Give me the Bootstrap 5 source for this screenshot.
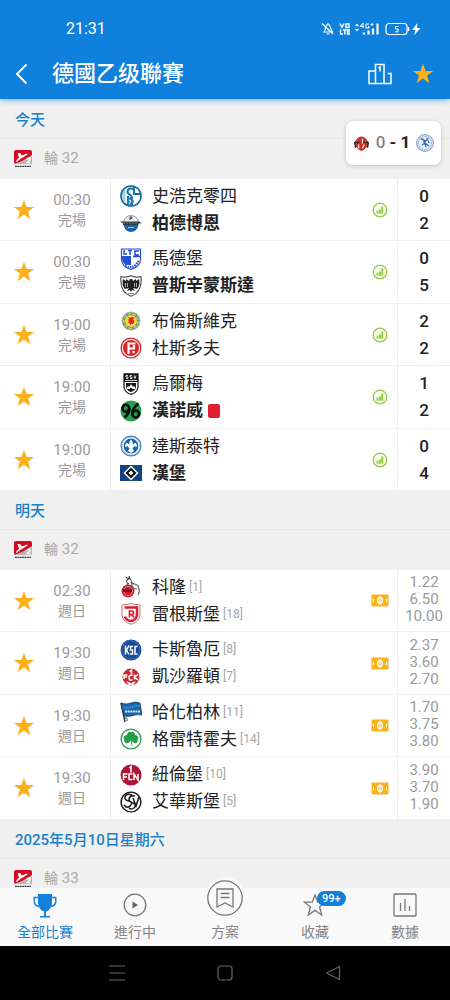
<!DOCTYPE html>
<html lang="zh-Hant">
<head>
<meta charset="utf-8">
<meta name="viewport" content="width=device-width, initial-scale=1">
<title>德國乙级聯賽</title>
<link href="https://cdn.jsdelivr.net/npm/bootstrap@5.3.0/dist/css/bootstrap.min.css" rel="stylesheet">
<style>
  :root { --brand: #0f80dc; --muted: #9a9a9a; --line: #efefef; }
  body { font-family: Roboto, "Noto Sans CJK TC", sans-serif; background: #f0f0f0; color: #222; }
  button { border: 0; background: none; padding: 0; line-height: 1; }
  svg { display: block; flex: none; }
  .top-bar { background: var(--brand); color: #fff; box-shadow: 0 1px 6px #0f80dc99; z-index: 2; }
  .status { height: 48px; padding: 10px 27px 0 66px; font-size: 16px; }
  .title-row { height: 51px; padding: 0 16px 0 14px; }
  .title-row h1 { font-size: 22px; font-weight: 500; line-height: 30px; }
  .feed { overflow-y: auto; scrollbar-width: none; }
  .feed::-webkit-scrollbar { display: none; }
  .day { height: 40px; padding: 0 15px; font-size: 15px; line-height: 43px; font-weight: 500; color: #1b80ca; border-bottom: 1px solid #e8e8e8; }
  .round { height: 39px; padding: 0 14px; gap: 12px; font-size: 15px; color: #aaa; }
  .round span { font-size: 14px; }
  .games { background: #fff; }
  .game { height: 62px; border-top: 1px solid var(--line); }
  .game:nth-child(even) { height: 63px; }
  .fav { width: 48px; }
  .kick { width: 48px; font-size: 15px; line-height: 20px; color: var(--muted); }
  .kick span { display: block; font-size: 14px; }
  .sides { margin-left: 14px; padding-left: 9px; border-left: 1px solid var(--line); font-size: 17px; line-height: 27px; }
  .side { height: 27px; gap: 10px; white-space: nowrap; }
  .side small { margin-left: -7px; font-size: 12px; color: #a6a6a6; }
  .win b { font-weight: 700; }
  .red-card { width: 12px; height: 14px; margin-left: -5px; border-radius: 2px; background: #e01f33; }
  .info { width: 35px; border-right: 1px solid var(--line); }
  .score, .odds { width: 52px; text-align: center; }
  .score { font-size: 17px; font-weight: 500; line-height: 27px; }
  .odds { padding-bottom: 2px; font-size: 15px; line-height: 17px; color: var(--muted); }
  .live { top: 121px; right: 9px; width: 95px; height: 44px; border-radius: 7px; background: #fff; box-shadow: 0 1px 4px #0003; font-size: 17px; z-index: 3; gap: 6px; }
  .tabs { height: 59px; background: #f9f9f9; z-index: 2; }
  .tabs a { color: #858585; font-size: 14px; line-height: 20px; text-decoration: none; padding-bottom: 4px; }
  .tabs a.active { color: #1b80ca; }
  .tab-icon { height: 26px; margin-bottom: 3px; }
  .hub { width: 42px; height: 42px; margin: -20px 0 3px; border-radius: 50%; background: #f9f9f9; }
  .count { top: -2px; left: 14px; padding: 0 5px; border-radius: 8px; background: var(--brand); color: #fff; font-size: 11px; line-height: 15px; font-weight: 500; }
  .sys { height: 55px; background: #000; }
  .sys button { width: 24%; }
</style>
</head>
<body>

<svg width="0" height="0" class="position-absolute" aria-hidden="true">
  <defs>
    <symbol id="star" viewBox="0 0 22 22"><path d="M11 .8 13.600 8H21.200L15.100 12.500 17.400 20.200 11 15.600 4.600 20.200 6.900 12.500.8 8H8.400Z" fill="#fcb01c"/></symbol>
    <symbol id="bundesliga" viewBox="0 0 18 18"><rect width="18" height="14" rx="2" fill="#d20a24"/><path d="M1 13.500 8 11 18 5V14H2Z" fill="#b5b5b5"/><path d="M12.500 9.500 16 8v2l-3 2.500h3.500" fill="none" stroke="#fff" stroke-width="1.300"/><path d="M3.500 3H6L8 5.500 13 3.500 13.500 4.500 9 7.500 7 8.500 2.500 12 2 11 5 7.500Z" fill="#fff"/><path d="M1 16.300h16" stroke="#444" stroke-width="1.300" stroke-dasharray="2 .4"/></symbol>
    <symbol id="stats" viewBox="0 0 16 16"><circle cx="8" cy="8" r="6.800" fill="#fbfff2" stroke="#96cc45" stroke-width="1.300"/><path d="M5.500 8.500v3.200M8 7.500v4.200M10.300 4.500v7.200" stroke="#8cc63a" stroke-width="1.800"/></symbol>
    <symbol id="ticket" viewBox="0 0 18 13"><rect x=".5" y=".5" width="17" height="12" rx="1" fill="#f8b21d"/><ellipse cx="9" cy="6.500" rx="2.300" ry="3" fill="none" stroke="#fff" stroke-width="1.300"/><path d="M9 2v9M2.500 5v3M15.500 5v3" stroke="#fff" stroke-width="1.100"/></symbol>

    <symbol id="schalke" viewBox="0 0 22 22"><circle cx="11" cy="11" r="10" fill="#e9f5fb" stroke="#0f6597" stroke-width="1.600"/><path d="M13 2A9 9 0 0 1 19.500 9H12Z M12 12h8a9 9 0 0 1-6 7.500Z" fill="#fff"/><path d="M6 3C2 6 1 13 5 18V6Z" fill="#9ed0e8"/><path d="M13 4C8 2 6 7 9 9s4 3 0 5M14 1.500V9h6.500M8 11v9M12 12v8" fill="none" stroke="#1670a4" stroke-width="1.900"/><path d="M7 13h5l2 3-2 4.500H8Z" fill="#267eae"/><path d="m9 15 2 1-2 3" stroke="#fff" fill="none"/></symbol>
    <symbol id="paderborn" viewBox="0 0 22 22"><circle cx="11" cy="11" r="7.500" fill="#edf1f4" stroke="#8a969e"/><path d="M4 13h14a7 7 0 0 1-14 0Z" fill="#1660ac"/><path d="M0 9.500h19l3 2H18v1.500H3V11.500Z" fill="#333b43"/><path d="M3 11h15" stroke="#99a" stroke-dasharray="2 1" stroke-width=".7"/><path d="M10 8V5h2v1.500h-2" stroke="#445" fill="none"/><path d="M8 15.500h6" stroke="#9cf"/></symbol>
    <symbol id="magdeburg" viewBox="0 0 22 22"><path d="M1.500 1H20.500V12C20 17 16 20 11 21.500 5 20 2 16 1.500 12Z" fill="#fff" stroke="#2b4ecb" stroke-width="1.200"/><path d="M2 8H11V17H5.500C3 15 2 13 2 10Z" fill="#2450d4"/><path d="M4 2v4h3M8 2.500h4M10 3v4M19 3h-4v4h4M13 8.500h7" fill="none" stroke="#2450d4" stroke-width="1.500"/><path d="M5 18q6 3 11-1l3-5" fill="none" stroke="#2450d4" stroke-width="2.500" stroke-dasharray="1.500 1"/></symbol>
    <symbol id="munster" viewBox="0 0 22 22"><path d="M1 1.500Q6 3 11 .8 16 3 21 1.500C22 12 18 19 11 21.300 4 19 0 12 1 1.500Z" fill="#fff" stroke="#444" stroke-width="1.100"/><path d="M3 4l3 2V4l3 2 1-2h2l1 2 3-2v2l3-2c1 5 0 8-2 10l-4-1 2 3-3-1-1 2-1-2-3 1 2-3-4 1C3 12 2 9 3 4Z" fill="#222"/><path d="M5.500 8v4M7.500 8v4M14.500 8v4M16.500 8v4" stroke="#fff" stroke-width=".6"/><path d="M8 18.500h6" stroke="#888"/></symbol>
    <symbol id="braunschweig" viewBox="0 0 22 22"><circle cx="11" cy="11" r="9" fill="#3e7dba" stroke="#a8b9a0"/><circle cx="11" cy="11" r="7.200" fill="none" stroke="#d8cb3a" stroke-width="1.600" stroke-dasharray="4 1"/><circle cx="11" cy="11" r="6" fill="#f6df3d"/><path d="M8 7l2 .5L12 7l3 1-2 1 1.500 2-1.500 3.500-1.500-1L10 15.500 9.500 13 7.500 12.500 9.500 11 7.500 10 9.500 9Z" fill="#dc2727"/></symbol>
    <symbol id="dusseldorf" viewBox="0 0 22 22"><circle cx="11" cy="11" r="10.500" fill="#da2528"/><circle cx="11" cy="11" r="8.600" fill="none" stroke="#fff" stroke-width="1.100"/><path d="M15.500 6.500H8.500V17M8.500 11.500H14V8" fill="none" stroke="#fff" stroke-width="2.200"/><circle cx="13.500" cy="15" r="1.300" fill="#fff"/></symbol>
    <symbol id="ulm" viewBox="0 0 22 22"><path d="M4 .8H18V14Q17 20 11 21.300 5 20 4 14Z" fill="#fff" stroke="#151515" stroke-width="1.200"/><path d="M4 1H18V9H4Z" fill="#161616"/><path d="M8 2.500H6V4h2v1.500H6M12 2.500h-2V4h2v1.500h-2M14 2.500l1 3 1-3M5 7.500h12" fill="none" stroke="#fff" stroke-width=".8"/><path d="M6 10h10v4q-1 4-5 5-4-1-5-5Z" fill="#191919"/><path d="M7 16V13.500H9.500L11 11 12.500 13.500H15V16H12.500L11 14.500 9.500 16Z" fill="#fff"/></symbol>
    <symbol id="hannover" viewBox="0 0 22 22"><circle cx="11" cy="11" r="10.500" fill="#2c9b50"/><circle cx="5.800" cy="8.200" r="3.400" fill="none" stroke="#081008" stroke-width="2.600"/><path d="M9.200 8Q10 13 4.500 17.500M18.500 3.500Q12.500 8 12.300 14" fill="none" stroke="#081008" stroke-width="2.700"/><circle cx="15.700" cy="14" r="3.400" fill="none" stroke="#081008" stroke-width="2.600"/></symbol>
    <symbol id="darmstadt" viewBox="0 0 22 22"><circle cx="11" cy="11" r="9.900" fill="#fff" stroke="#3e7cb6" stroke-width="1.200"/><circle cx="11" cy="11" r="8.600" fill="none" stroke="#7aa6ce" stroke-width="1" stroke-dasharray="1 1"/><circle cx="11" cy="11" r="7.400" fill="#1764ad"/><path d="M11 4.500Q14 8 12 11.500 13 8 15.500 8 18 10 16 12.500 15.500 11 14.500 11 14 12.500 12.500 13L14 16 11 18 8 16 9.500 13Q8 12.500 7.500 11 6.500 11 6 12.500 4 10 6.500 8 9 8 10 11.500 8 8 11 4.500Z" fill="#fff"/></symbol>
    <symbol id="hamburg" viewBox="0 0 22 22"><path d="M0 3H22V19H0Z" fill="#124483"/><path d="m11 3.500 7.500 7.500-7.500 7.500L3.500 11Z" fill="#fff"/><path d="m11 5.500 5.500 5.500-5.500 5.500L5.500 11Z" fill="#111"/><path d="m11 8.500 2.500 2.500-2.500 2.500L8.500 11Z" fill="#fff"/></symbol>
    <symbol id="koln" viewBox="0 0 22 22"><circle cx="8" cy="15" r="6.500" fill="#c71932"/><circle cx="8" cy="15" r="4.500" fill="none" stroke="#eaa" stroke-width=".7"/><path d="M8 9 6.500 5 9 2 11 4 12 7 18 9.500 19.500 15 18 19M11 6l2 6 4 1M9 7 5 11" fill="none" stroke="#666" stroke-width="1.200"/><path d="M9 3 5.500 1M10 3 9 0" stroke="#222"/><path d="M3 15h9M4 13v3M8 13v3M11 13v3" stroke="#4c0711" stroke-width="1.200"/></symbol>
    <symbol id="regensburg" viewBox="0 0 22 22"><path d="M2 2Q11-.5 20 2V12Q19 19 11 21.300 3 19 2 12Z" fill="#fff" stroke="#d76b75" stroke-width="1"/><path d="M4.500 4.500H17V12Q16 17.500 11 18 6 17.500 5 13.500" fill="none" stroke="#d61f2d" stroke-width="2.500"/><path d="M9.500 14.500V8H11.500Q13.500 8 13.500 10T11.500 11.500H10M11.500 11.500 14 14.500" fill="none" stroke="#d61f2d" stroke-width="1.700"/></symbol>
    <symbol id="karlsruhe" viewBox="0 0 22 22"><circle cx="11" cy="11" r="10.500" fill="#174a98"/><circle cx="11" cy="11" r="9.200" fill="none" stroke="#5480bf" stroke-width=".7"/><path d="M5.500 6.500v9M9 6.500 6.500 11 9 15.500M13 7.500h-2.500v3.500H12.500v4H10M17.500 7.500H15v7.500h2.500" fill="none" stroke="#fff" stroke-width="1.500"/></symbol>
    <symbol id="kaiserslautern" viewBox="0 0 22 22"><circle cx="11" cy="11" r="8.500" fill="#c92833"/><path d="M9.500 5.500 11.500 4V8.500M4 13V9H7.500M4 11H7M12.500 9.500Q8.500 8.500 9 12T12.500 13.500M14.500 8.500v5M18 8.500l-3.500 2.500 3.500 3" fill="none" stroke="#fff" stroke-width="1.500"/><path d="M6 15.500l3 .5 2 1.500 2-1.500 3-.5-3 3.500H9Z" fill="#fff"/></symbol>
    <symbol id="hertha" viewBox="0 0 22 22"><path d="M1 2 5 21" stroke="#26343f" stroke-width="1.500"/><path d="M1 2Q6 4 11 2T20 2L22 14Q17 13 13 14.500T4 15Z" fill="#1766ac" stroke="#16314c" stroke-width=".7"/><path d="M3 6Q8 8 12 6T20 5" fill="none" stroke="#2f80c8" stroke-width="2"/><path d="M5 10.500h15" stroke="#d5e6f6" stroke-width="2" stroke-dasharray="2 .6"/><path d="M5 17q3-1 2 3" stroke="#444" fill="none"/></symbol>
    <symbol id="furth" viewBox="0 0 22 22"><circle cx="11" cy="11" r="9.900" fill="#fff" stroke="#2b9d55" stroke-width="1.300"/><path d="M11 11Q6 8 8 5 10 3 11 5 12 3 14 5 16 8 11 11Q13 6 17 8 19 10 17 12 18 14 16 15 13 15 11 11Q10 15 6 15 4 14 5 12 3 10 5 8 9 6 11 11L12 17.500" fill="#22a04b" stroke="#22a04b"/></symbol>
    <symbol id="nurnberg" viewBox="0 0 22 22"><circle cx="11" cy="11" r="10.500" fill="#ad1737"/><path d="M9.500 4 11 2.500V8.500M3.500 16V10H7.500M3.500 13H7M12.500 10H9V15.500H12.500M14 16V10L18 16V10" fill="none" stroke="#fff" stroke-width="1.500"/></symbol>
    <symbol id="elversberg" viewBox="0 0 22 22"><circle cx="11" cy="11" r="9.900" fill="#fff" stroke="#171717" stroke-width="1.400"/><path d="M12 4Q6 2 5 6 4 9 9 10T10 15Q7 18 4 14M15 5Q10 4 9 8 9 11 13 12T14 17Q11 19 9 17M13 7 16 15 19 6" fill="none" stroke="#1a1a1a" stroke-width="1.500"/></symbol>
  </defs>
</svg>

<div class="d-flex flex-column vh-100 position-relative overflow-hidden">
  <header class="top-bar position-relative">
    <div class="status d-flex align-items-center justify-content-between">
      <span>21:31</span>
      <svg width="102" height="16" viewBox="0 0 102 16" fill="none" stroke="#fff" stroke-width="1.200" aria-label="5%">
        <path d="M3 11Q4.500 9 4.500 6.500 5 3.500 7 3.500T9.500 7L11.500 11ZM1 2.500 12 13M7 2v1.500M5.500 13h3"/>
        <path d="M19 2.500 21 6.500 23 2.500M25 3h3v3.500h-3ZM19.500 8.500V13H22M22 9h3.500M23.800 9v4.500M29 9h-2.500v4H29M26.500 11H29" stroke-width="1.400"/>
        <path d="M34.500 5 36 3.500 37.500 5M34.500 8 36 9.500 37.500 8" stroke-width="1.100"/>
        <path d="M42 7V2L39 5.500h4M48 3h-3v4h3V5.500h-1M49.500 3.500h3M51 2v3" stroke-width="1"/>
        <path d="M43 13.500v-2M47.500 13.500v-4M52 13.500v-6M56.500 13.500V2.500" stroke-width="2.200"/>
        <rect x="65" y="2.500" width="21" height="11" rx="3"/><path d="M87.500 6v4" stroke-width="1.500"/>
        <path d="M77.500 5.500h-3V8h2.500v2.800h-3" stroke-width="1"/>
        <path d="M96.500 2 91 9h3.500L93 14.500 99.500 7H96Z" fill="#fff" stroke="none"/>
      </svg>
    </div>
    <div class="title-row d-flex align-items-center">
      <button aria-label="返回"><svg width="14" height="22" viewBox="0 0 14 22" fill="none" stroke="#fff" stroke-width="1.900"><path d="M12.500 1.500 3 11l9.500 9.500"/></svg></button>
      <h1 class="mb-0 ms-4 flex-grow-1">德國乙级聯賽</h1>
      <button class="me-3" aria-label="排名"><svg width="24" height="22" viewBox="0 0 24 22" fill="none" stroke="#fff" stroke-width="1.500"><path d="M7.500 20.500V1.500h8.500v19M7.500 8H1v12.500h22V10.500h-3.500M10.500 5 12 4V8.500"/></svg></button>
      <button class="ms-1" aria-label="收藏聯賽"><svg width="22" height="22"><use href="#star"/></svg></button>
    </div>
  </header>

  <a href="#live" class="live position-absolute d-flex align-items-center justify-content-center text-decoration-none text-dark">
    <svg width="17" height="17" viewBox="0 0 18 18"><path d="M1 8 4 5 5 12 2 14ZM17 8 14 5 13 12 16 14Z" fill="#332b20"/><path d="M4 4Q9-1 14 4L15.500 10Q13 16 9 17 5 16 2.500 10Z" fill="#cb342d"/><path d="M6 10v4M10 4v5M12 10l-2 4" stroke="#fff" stroke-width="1.200"/><path d="M3 8h4M11 8h4" stroke="#40251f"/></svg>
    <span class="fw-medium"><span class="text-black-50">0</span> <b>- 1</b></span>
    <svg width="18" height="18" viewBox="0 0 18 18"><circle cx="9" cy="9" r="8.400" fill="#eef4fb" stroke="#7397c9"/><circle cx="9" cy="9" r="6.600" fill="none" stroke="#91aed6" stroke-width="1.300" stroke-dasharray="1.300 .7"/><path d="M5 5q4 0 3 4l4-5M6 11l3-2 4 3M8 6l2 7M12 6l1 3" stroke="#356aad" stroke-width="1.300" fill="none"/></svg>
  </a>

  <main class="feed flex-grow-1">
    <section>
      <h2 class="day mb-0">今天</h2>
      <div class="round d-flex align-items-center"><svg width="18" height="18"><use href="#bundesliga"/></svg><div><span>輪</span> 32</div></div>
      <ul class="games list-unstyled mb-0">
        <li class="game d-flex align-items-center">
          <button class="fav" aria-label="收藏"><svg class="mx-auto" width="22" height="22"><use href="#star"/></svg></button>
          <div class="kick text-center">00:30<span>完場</span></div>
          <div class="sides h-100 flex-grow-1 d-flex flex-column justify-content-center">
            <div class="side d-flex align-items-center"><svg width="22" height="22"><use href="#schalke"/></svg>史浩克零四</div>
            <div class="side win d-flex align-items-center"><svg width="22" height="22"><use href="#paderborn"/></svg><b>柏德博恩</b></div>
          </div>
          <div class="info h-100 d-flex align-items-center justify-content-center"><svg width="16" height="16"><use href="#stats"/></svg></div>
          <div class="score">0<br>2</div>
        </li>
        <li class="game d-flex align-items-center">
          <button class="fav" aria-label="收藏"><svg class="mx-auto" width="22" height="22"><use href="#star"/></svg></button>
          <div class="kick text-center">00:30<span>完場</span></div>
          <div class="sides h-100 flex-grow-1 d-flex flex-column justify-content-center">
            <div class="side d-flex align-items-center"><svg width="22" height="22"><use href="#magdeburg"/></svg>馬德堡</div>
            <div class="side win d-flex align-items-center"><svg width="22" height="22"><use href="#munster"/></svg><b>普斯辛蒙斯達</b></div>
          </div>
          <div class="info h-100 d-flex align-items-center justify-content-center"><svg width="16" height="16"><use href="#stats"/></svg></div>
          <div class="score">0<br>5</div>
        </li>
        <li class="game d-flex align-items-center">
          <button class="fav" aria-label="收藏"><svg class="mx-auto" width="22" height="22"><use href="#star"/></svg></button>
          <div class="kick text-center">19:00<span>完場</span></div>
          <div class="sides h-100 flex-grow-1 d-flex flex-column justify-content-center">
            <div class="side d-flex align-items-center"><svg width="22" height="22"><use href="#braunschweig"/></svg>布倫斯維克</div>
            <div class="side d-flex align-items-center"><svg width="22" height="22"><use href="#dusseldorf"/></svg>杜斯多夫</div>
          </div>
          <div class="info h-100 d-flex align-items-center justify-content-center"><svg width="16" height="16"><use href="#stats"/></svg></div>
          <div class="score">2<br>2</div>
        </li>
        <li class="game d-flex align-items-center">
          <button class="fav" aria-label="收藏"><svg class="mx-auto" width="22" height="22"><use href="#star"/></svg></button>
          <div class="kick text-center">19:00<span>完場</span></div>
          <div class="sides h-100 flex-grow-1 d-flex flex-column justify-content-center">
            <div class="side d-flex align-items-center"><svg width="22" height="22"><use href="#ulm"/></svg>烏爾梅</div>
            <div class="side win d-flex align-items-center"><svg width="22" height="22"><use href="#hannover"/></svg><b>漢諾威</b><i class="red-card"></i></div>
          </div>
          <div class="info h-100 d-flex align-items-center justify-content-center"><svg width="16" height="16"><use href="#stats"/></svg></div>
          <div class="score">1<br>2</div>
        </li>
        <li class="game d-flex align-items-center">
          <button class="fav" aria-label="收藏"><svg class="mx-auto" width="22" height="22"><use href="#star"/></svg></button>
          <div class="kick text-center">19:00<span>完場</span></div>
          <div class="sides h-100 flex-grow-1 d-flex flex-column justify-content-center">
            <div class="side d-flex align-items-center"><svg width="22" height="22"><use href="#darmstadt"/></svg>達斯泰特</div>
            <div class="side win d-flex align-items-center"><svg width="22" height="22"><use href="#hamburg"/></svg><b>漢堡</b></div>
          </div>
          <div class="info h-100 d-flex align-items-center justify-content-center"><svg width="16" height="16"><use href="#stats"/></svg></div>
          <div class="score">0<br>4</div>
        </li>
      </ul>
    </section>

    <section>
      <h2 class="day mb-0">明天</h2>
      <div class="round d-flex align-items-center"><svg width="18" height="18"><use href="#bundesliga"/></svg><div><span>輪</span> 32</div></div>
      <ul class="games list-unstyled mb-0">
        <li class="game d-flex align-items-center">
          <button class="fav" aria-label="收藏"><svg class="mx-auto" width="22" height="22"><use href="#star"/></svg></button>
          <div class="kick text-center">02:30<span>週日</span></div>
          <div class="sides h-100 flex-grow-1 d-flex flex-column justify-content-center">
            <div class="side d-flex align-items-center"><svg width="22" height="22"><use href="#koln"/></svg>科隆<small>[1]</small></div>
            <div class="side d-flex align-items-center"><svg width="22" height="22"><use href="#regensburg"/></svg>雷根斯堡<small>[18]</small></div>
          </div>
          <div class="info h-100 d-flex align-items-center justify-content-center"><svg width="18" height="13"><use href="#ticket"/></svg></div>
          <div class="odds">1.22<br>6.50<br>10.00</div>
        </li>
        <li class="game d-flex align-items-center">
          <button class="fav" aria-label="收藏"><svg class="mx-auto" width="22" height="22"><use href="#star"/></svg></button>
          <div class="kick text-center">19:30<span>週日</span></div>
          <div class="sides h-100 flex-grow-1 d-flex flex-column justify-content-center">
            <div class="side d-flex align-items-center"><svg width="22" height="22"><use href="#karlsruhe"/></svg>卡斯魯厄<small>[8]</small></div>
            <div class="side d-flex align-items-center"><svg width="22" height="22"><use href="#kaiserslautern"/></svg>凱沙羅頓<small>[7]</small></div>
          </div>
          <div class="info h-100 d-flex align-items-center justify-content-center"><svg width="18" height="13"><use href="#ticket"/></svg></div>
          <div class="odds">2.37<br>3.60<br>2.70</div>
        </li>
        <li class="game d-flex align-items-center">
          <button class="fav" aria-label="收藏"><svg class="mx-auto" width="22" height="22"><use href="#star"/></svg></button>
          <div class="kick text-center">19:30<span>週日</span></div>
          <div class="sides h-100 flex-grow-1 d-flex flex-column justify-content-center">
            <div class="side d-flex align-items-center"><svg width="22" height="22"><use href="#hertha"/></svg>哈化柏林<small>[11]</small></div>
            <div class="side d-flex align-items-center"><svg width="22" height="22"><use href="#furth"/></svg>格雷特霍夫<small>[14]</small></div>
          </div>
          <div class="info h-100 d-flex align-items-center justify-content-center"><svg width="18" height="13"><use href="#ticket"/></svg></div>
          <div class="odds">1.70<br>3.75<br>3.80</div>
        </li>
        <li class="game d-flex align-items-center">
          <button class="fav" aria-label="收藏"><svg class="mx-auto" width="22" height="22"><use href="#star"/></svg></button>
          <div class="kick text-center">19:30<span>週日</span></div>
          <div class="sides h-100 flex-grow-1 d-flex flex-column justify-content-center">
            <div class="side d-flex align-items-center"><svg width="22" height="22"><use href="#nurnberg"/></svg>紐倫堡<small>[10]</small></div>
            <div class="side d-flex align-items-center"><svg width="22" height="22"><use href="#elversberg"/></svg>艾華斯堡<small>[5]</small></div>
          </div>
          <div class="info h-100 d-flex align-items-center justify-content-center"><svg width="18" height="13"><use href="#ticket"/></svg></div>
          <div class="odds">3.90<br>3.70<br>1.90</div>
        </li>
      </ul>
    </section>

    <section>
      <h2 class="day mb-0">2025年5月10日星期六</h2>
      <div class="round d-flex align-items-center"><svg width="18" height="18"><use href="#bundesliga"/></svg><div><span>輪</span> 33</div></div>
    </section>
  </main>

  <nav class="tabs row g-0 position-relative">
    <a href="#all" class="active col d-flex flex-column align-items-center justify-content-end">
      <span class="tab-icon"><svg width="24" height="26" viewBox="0 0 24 26"><path d="M5 1H19V10Q18 17 13 18.500V23H17V24.500H7V23H11V18.500Q6 17 5 10Z" fill="#1481dd"/><path d="M5 4.500H1.200V9Q2 13 6 13.500M19 4.500H22.800V9Q22 13 18 13.500" fill="none" stroke="#1481dd" stroke-width="1.400"/></svg></span>全部比賽
    </a>
    <a href="#running" class="col d-flex flex-column align-items-center justify-content-end">
      <span class="tab-icon"><svg width="24" height="24" viewBox="0 0 24 24"><circle cx="12" cy="12" r="10.800" fill="none" stroke="#777" stroke-width="1.300"/><path d="M9.500 8.500 15 12 9.500 15.500Z" fill="#666"/></svg></span>進行中
    </a>
    <a href="#plans" class="col d-flex flex-column align-items-center justify-content-end">
      <span class="hub d-flex align-items-center justify-content-center"><svg width="38" height="38" viewBox="0 0 38 38" fill="none" stroke="#777" stroke-width="1.300"><circle cx="19" cy="19" r="17.200"/><path d="M11 10H27V28L19 24 11 28ZM14.500 14.500H23.500M14.500 18.500H23.500"/></svg></span>方案
    </a>
    <a href="#favourites" class="col d-flex flex-column align-items-center justify-content-end">
      <span class="tab-icon position-relative"><svg width="24" height="24" viewBox="0 0 24 24"><path d="M12 2 14.800 9.200H22.500L16.500 14 18.700 22 12 17.400 5.300 22 7.500 14 1.500 9.200H9.200Z" fill="none" stroke="#777" stroke-width="1.300"/></svg><span class="count position-absolute">99+</span></span>收藏
    </a>
    <a href="#data" class="col d-flex flex-column align-items-center justify-content-end">
      <span class="tab-icon"><svg width="24" height="24" viewBox="0 0 24 24" fill="none" stroke="#777" stroke-width="1.300"><rect x="1" y="1" width="22" height="22" rx="1"/><path d="M7.500 10v8M12 6v12M16.500 13v5"/></svg></span>數據
    </a>
  </nav>

  <div class="sys d-flex align-items-center justify-content-center">
    <button aria-label="選單"><svg class="mx-auto" width="16" height="16" viewBox="0 0 16 16" stroke="#666" stroke-width="1.200"><path d="M0 1h16M0 8h16M0 15h16"/></svg></button>
    <button aria-label="主畫面"><svg class="mx-auto" width="16" height="16" viewBox="0 0 16 16" fill="none" stroke="#666" stroke-width="1.200"><rect x="1" y="1" width="14" height="14" rx="3"/></svg></button>
    <button aria-label="返回"><svg class="mx-auto" width="16" height="16" viewBox="0 0 16 16" fill="none" stroke="#666" stroke-width="1.200"><path d="M14.500 1.500V14.500L1.500 8Z" stroke-linejoin="round"/></svg></button>
  </div>
</div>

<script src="https://cdn.jsdelivr.net/npm/bootstrap@5.3.0/dist/js/bootstrap.bundle.min.js"></script>
</body>
</html>
